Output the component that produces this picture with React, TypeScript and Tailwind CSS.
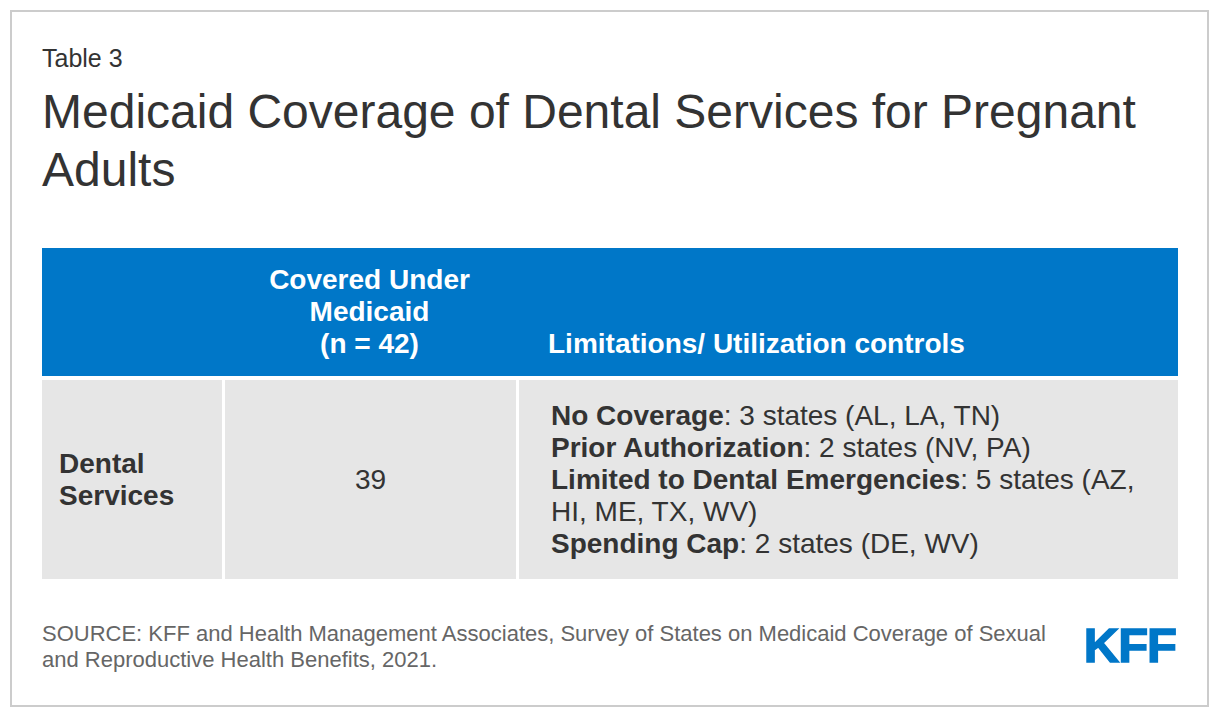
import React from "react";

const limits = [
  { label: "No Coverage", text: ": 3 states (AL, LA, TN)" },
  { label: "Prior Authorization", text: ": 2 states (NV, PA)" },
  { label: "Limited to Dental Emergencies", text: ": 5 states (AZ, HI, ME, TX, WV)" },
  { label: "Spending Cap", text: ": 2 states (DE, WV)" },
];

export default function App() {
  return (
    <div className="bg-white w-[1220px] h-[718px] p-[10px] font-['Liberation_Sans',Arial,sans-serif]">
      <div className="w-[1199px] h-[697px] border-2 border-[#cccccc] pl-[30px] pt-[32px]">
        <p className="text-[25px] leading-[28px] text-[#333333]">Table 3</p>
        <h1 className="mt-[11px] text-[48px] leading-[58px] text-[#333333] w-[1136px]">
          Medicaid Coverage of Dental Services for Pregnant Adults
        </h1>

        <div className="mt-[49px] w-[1136px] text-[28px] leading-[32px]">
          {/* header */}
          <div className="grid grid-cols-[181px_293px_662px] bg-[#0077c8] text-white font-bold py-[16px]">
            <div />
            <div className="text-center">
              Covered Under
              <br />
              Medicaid
              <br />
              (n = 42)
            </div>
            <div className="flex items-end pl-[32px]">Limitations/ Utilization controls</div>
          </div>

          {/* body row */}
          <div className="mt-[4px] grid grid-cols-[180px_291px_659px] gap-x-[3px] bg-white">
            <div className="bg-[#e6e6e6] flex items-center pl-[17px] font-bold text-[#333333]">
              Dental
              <br />
              Services
            </div>
            <div className="bg-[#e6e6e6] flex items-center justify-center text-[#333333]">39</div>
            <div className="bg-[#e6e6e6] pl-[32px] pr-[32px] pt-[20px] pb-[19px] text-[#333333]">
              {limits.map((l) => (
                <div key={l.label}>
                  <span className="font-bold">{l.label}</span>
                  {l.text}
                </div>
              ))}
            </div>
          </div>
        </div>

        <div className="mt-[42px] w-[1136px] flex justify-between items-start">
          <p className="w-[1020px] text-[22px] leading-[26px] text-[#666666]">
            SOURCE: KFF and Health Management Associates, Survey of States on Medicaid Coverage of Sexual and
            Reproductive Health Benefits, 2021.
          </p>
          <div className="text-[49px] leading-[48px] font-bold text-[#0077c8] tracking-[-1px] pr-[2px] [-webkit-text-stroke:1.5px_#0077c8]">
            KFF
          </div>
        </div>
      </div>
    </div>
  );
}
